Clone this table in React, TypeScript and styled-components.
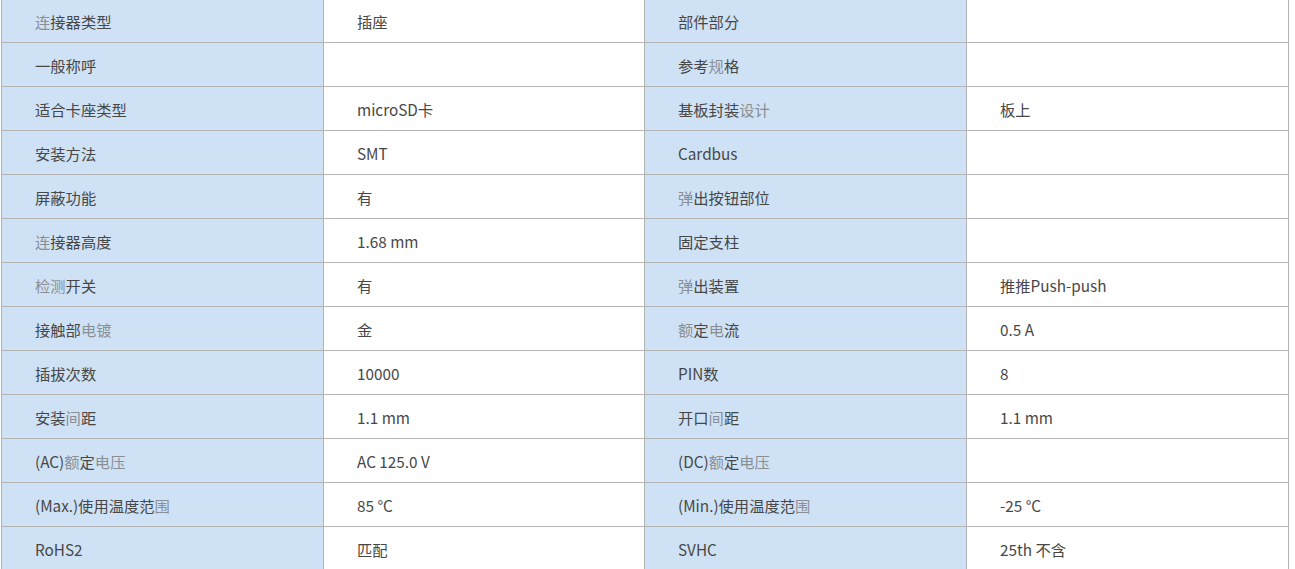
import React, { FC } from 'react';
import styled, { createGlobalStyle } from 'styled-components';

const BORDER = '#b4b4b4';
const LABEL_BG = '#cfe2f5';
const TEXT = '#474747';
const DIM_TEXT = '#8a8f96';

const GlobalStyle = createGlobalStyle`
  html, body {
    margin: 0;
    padding: 0;
    background: #fff;
    overflow: hidden;
  }
`;

const Wrapper = styled.div`
  padding-left: 1px;
  margin-top: -2px;
  width: 1287px;
`;

const Table = styled.table`
  width: 1287px;
  border-collapse: collapse;
  table-layout: fixed;
  font-family: 'Noto Sans CJK SC', 'Noto Sans', sans-serif;
  font-size: 15.3px;
  color: ${TEXT};
`;

const Col = styled.col<{ $narrow?: boolean }>`
  width: ${({ $narrow }) => ($narrow ? 321 : 322)}px;
`;

const Cell = styled.td<{ $label?: boolean }>`
  height: 42px;
  padding: 1px 0 0 33px;
  border: 1px solid ${BORDER};
  background: ${({ $label }) => ($label ? LABEL_BG : '#fff')};
  vertical-align: middle;
  white-space: nowrap;
  line-height: 20px;
`;

const Dim = styled.span`
  color: ${DIM_TEXT};
`;

// text inside [ ] is rendered with the lighter fallback look
const Rich: FC<{ text: string }> = ({ text }) => {
  const parts = text.split(/(\[[^\]]*\])/g).filter(Boolean);
  return (
    <>
      {parts.map((p, i) =>
        p.startsWith('[') ? <Dim key={i}>{p.slice(1, -1)}</Dim> : <React.Fragment key={i}>{p}</React.Fragment>
      )}
    </>
  );
};

type Row = [string, string, string, string];

const rows: Row[] = [
  ['[连]接器类型', '插座', '部件部分', ''],
  ['一般称呼', '', '参考[规]格', ''],
  ['适合卡座类型', 'microSD卡', '基板封装[设计]', '板上'],
  ['安装方法', 'SMT', 'Cardbus', ''],
  ['屏蔽功能', '有', '[弹]出按钮部位', ''],
  ['[连]接器高度', '1.68 mm', '固定支柱', ''],
  ['[检测]开关', '有', '[弹]出装置', '推推Push-push'],
  ['接触部[电镀]', '金', '[额]定[电]流', '0.5 A'],
  ['插拔次数', '10000', 'PIN数', '8'],
  ['安装[间]距', '1.1 mm', '开口[间]距', '1.1 mm'],
  ['(AC)[额]定[电压]', 'AC 125.0 V', '(DC)[额]定[电压]', ''],
  ['(Max.)使用温度范[围]', '85 °C', '(Min.)使用温度范[围]', '-25 °C'],
  ['RoHS2', '匹配', 'SVHC', '25th 不含'],
];

const SpecTable: FC = () => (
  <Wrapper>
    <Table>
      <colgroup>
        <Col />
        <Col $narrow />
        <Col />
        <Col />
      </colgroup>
      <tbody>
        {rows.map((r, i) => (
          <tr key={i}>
            <Cell $label><Rich text={r[0]} /></Cell>
            <Cell><Rich text={r[1]} /></Cell>
            <Cell $label><Rich text={r[2]} /></Cell>
            <Cell><Rich text={r[3]} /></Cell>
          </tr>
        ))}
      </tbody>
    </Table>
  </Wrapper>
);

const App: FC = () => (
  <>
    <GlobalStyle />
    <SpecTable />
  </>
);

export default App;
